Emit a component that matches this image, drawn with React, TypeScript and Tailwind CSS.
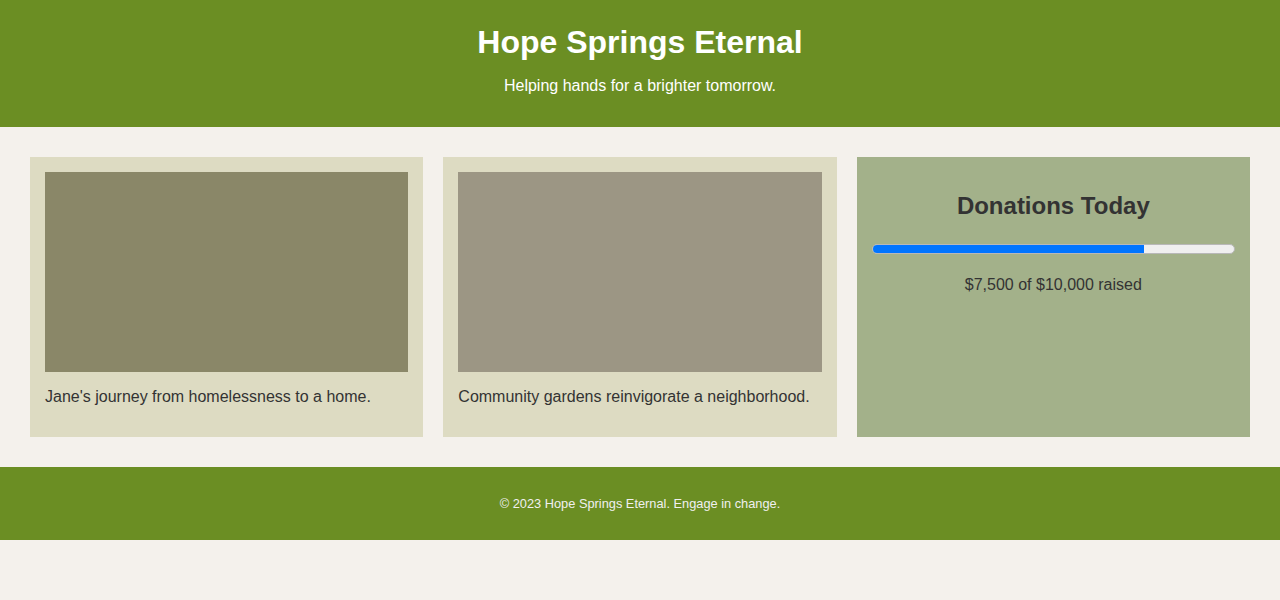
export default function App() {
  return (
    <div className="min-h-[600px] bg-[#f4f1ec] font-['Liberation_Sans',Arial,sans-serif] text-[#333]">
      <header className="bg-[#6b8e23] pt-6 pb-8 text-center text-white">
        <h1 className="text-[32px] font-bold leading-[37px]">Hope Springs Eternal</h1>
        <p className="mt-4 text-base leading-[18px]">Helping hands for a brighter tomorrow.</p>
      </header>
      <main className="grid grid-cols-3 gap-5 p-[30px]">
        <article className="bg-[#dddbc2] p-[15px] pb-[31px]">
          <div className="h-[200px] bg-[#8a8768]" />
          <p className="mt-4 text-base leading-[18px]">Jane's journey from homelessness to a home.</p>
        </article>
        <article className="bg-[#dddbc2] p-[15px] pb-[31px]">
          <div className="h-[200px] bg-[#9c9684]" />
          <p className="mt-4 text-base leading-[18px]">Community gardens reinvigorate a neighborhood.</p>
        </article>
        <article className="bg-[#a3b18a] px-[15px] pt-[35px] text-center">
          <h2 className="text-2xl font-bold leading-[28px]">Donations Today</h2>
          <div className="mt-[24px] h-[10px] w-full overflow-hidden rounded-full border border-[#b8b8b8] bg-[#efefef]">
            <div className="h-full bg-[#0075ff]" style={{ width: `${(7500 / 10000) * 100}%` }} />
          </div>
          <p className="mt-[22px] text-base leading-[18px]">$7,500 of $10,000 raised</p>
        </article>
      </main>
      <footer className="bg-[#6b8e23] py-[28px] text-center text-[12.8px] leading-[17px] text-[#f0f0f0]">
        © 2023 Hope Springs Eternal. Engage in change.
      </footer>
    </div>
  );
}
